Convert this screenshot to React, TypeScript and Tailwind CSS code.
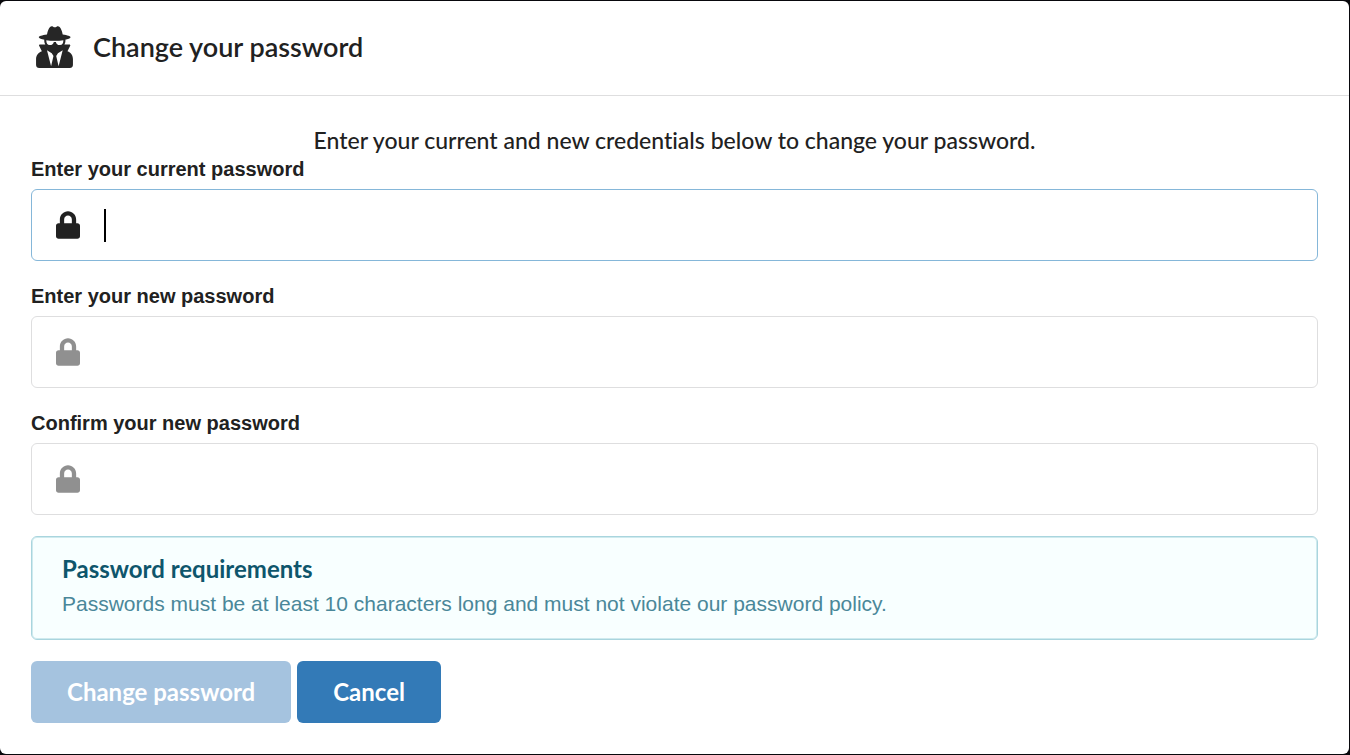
import { useState } from "react";
import { FaLock } from "react-icons/fa";

const fields = [
  { id: "current-password", label: "Enter your current password" },
  { id: "new-password", label: "Enter your new password" },
  { id: "confirm-password", label: "Confirm your new password" },
];

function SecretIcon({ className }: { className?: string }) {
  return (
    <svg viewBox="0 0 108 123" fill="currentColor" aria-hidden="true" className={className}>
      {/* hat */}
      <path d="M32 25C34 15 37 7 41 3C44 0 47 0 50 2C53 4 57 4 60 2C63 0 66 0 69 3C73 7 76 15 78 25C92 27 101 30 101 33C101 38 82 42 55 42S8 38 8 33C8 30 17 27 32 25Z" />
      {/* face and coat */}
      <path
        fillRule="evenodd"
        d="M24 38H86V44C86 48 85 51 83 54H97C100 54 101 56 100 58L92 74C102 77 108 86 108 97V114C108 119 104 123 99 123H9C4 123 0 119 0 114V97C0 86 7 77 17 74L9 58C8 56 9 54 12 54H27C25 51 24 48 24 44ZM30 42C30 50 33 56 40 56C47 56 51 53 52 47H58C59 53 63 56 70 56C77 56 80 50 80 42C66 44 44 44 30 42ZM32 71L44 118L51 88L46 80ZM78 71L66 118L59 88L64 80Z"
      />
    </svg>
  );
}

export default function App() {
  const [values, setValues] = useState<Record<string, string>>({});
  const [focused, setFocused] = useState("current-password");

  const canSubmit = fields.every((field) => values[field.id]);

  return (
    <div className="flex min-h-screen flex-col bg-[#08080c] py-px pr-px font-['Liberation_Sans',Arial,sans-serif] text-[#212121]">
      <main className="flex-1 rounded-md bg-white">
        {/* Header */}
        <header className="flex items-center gap-5 border-b border-[#dededf] pt-[21px] pr-8 pb-[23px] pl-9">
          <SecretIcon className="h-[42px] w-[37px] text-[#262626]" />
          <h1 className="font-['Lato',sans-serif] text-[27px] leading-[50px] font-semibold">
            Change your password
          </h1>
        </header>

        <form
          className="px-[31px] pt-7 pb-[31px]"
          onSubmit={(e) => e.preventDefault()}
        >
          <h2 className="text-center font-['Lato',sans-serif] text-[23px] leading-8 font-medium [font-variant-ligatures:none]">
            Enter your current and new credentials below to change your password.
          </h2>

          {/* Password fields */}
          <div className="mt-px flex flex-col gap-[23px]">
            {fields.map((field) => {
              const active = focused === field.id;

              return (
                <div key={field.id}>
                  <label
                    htmlFor={field.id}
                    className="mb-2 block text-[20px] leading-6 font-bold"
                  >
                    {field.label}
                  </label>
                  <div
                    className={`relative flex h-[72px] items-center rounded-md border pl-6 ${
                      active ? "border-[#85b7d9]" : "border-[#dededf]"
                    }`}
                  >
                    <FaLock
                      className={`h-7 w-6 ${
                        active ? "text-[#212121]" : "text-[#909090]"
                      }`}
                    />
                    <input
                      id={field.id}
                      type="password"
                      autoFocus={field.id === "current-password"}
                      value={values[field.id] ?? ""}
                      onChange={(e) =>
                        setValues({ ...values, [field.id]: e.target.value })
                      }
                      onFocus={() => setFocused(field.id)}
                      className="ml-6 h-full flex-1 bg-transparent text-[29px] caret-transparent outline-none focus:not-placeholder-shown:caret-black"
                      placeholder=" "
                    />
                    {active && !values[field.id] && (
                      <span className="pointer-events-none absolute left-[72px] h-[33px] w-0.5 bg-black" />
                    )}
                  </div>
                </div>
              );
            })}
          </div>

          {/* Requirements */}
          <section className="mt-[21px] rounded-md border border-[#a9d5de] bg-[#f8ffff] px-[30px] pt-[14px] pb-[19px] inset-shadow-[0_0_0_1px_#cfeaee]">
            <h3 className="font-['Lato',sans-serif] text-[24px] leading-9 font-bold text-[#0e566c]">
              Password requirements
            </h3>
            <p className="mt-px text-[21px] leading-8 text-[#4a8799]">
              Passwords must be at least 10 characters long and must not violate
              our password policy.
            </p>
          </section>

          <div className="mt-[21px] flex gap-1.5">
            <button
              type="submit"
              disabled={!canSubmit}
              className="h-[62px] rounded-md bg-[#337ab7] px-9 font-['Lato',sans-serif] text-[24px] font-bold text-white disabled:bg-[#a5c3df]"
            >
              Change password
            </button>
            <button
              type="button"
              onClick={() => setValues({})}
              className="h-[62px] rounded-md bg-[#337ab7] px-9 font-['Lato',sans-serif] text-[24px] font-bold text-white"
            >
              Cancel
            </button>
          </div>
        </form>
      </main>
    </div>
  );
}
